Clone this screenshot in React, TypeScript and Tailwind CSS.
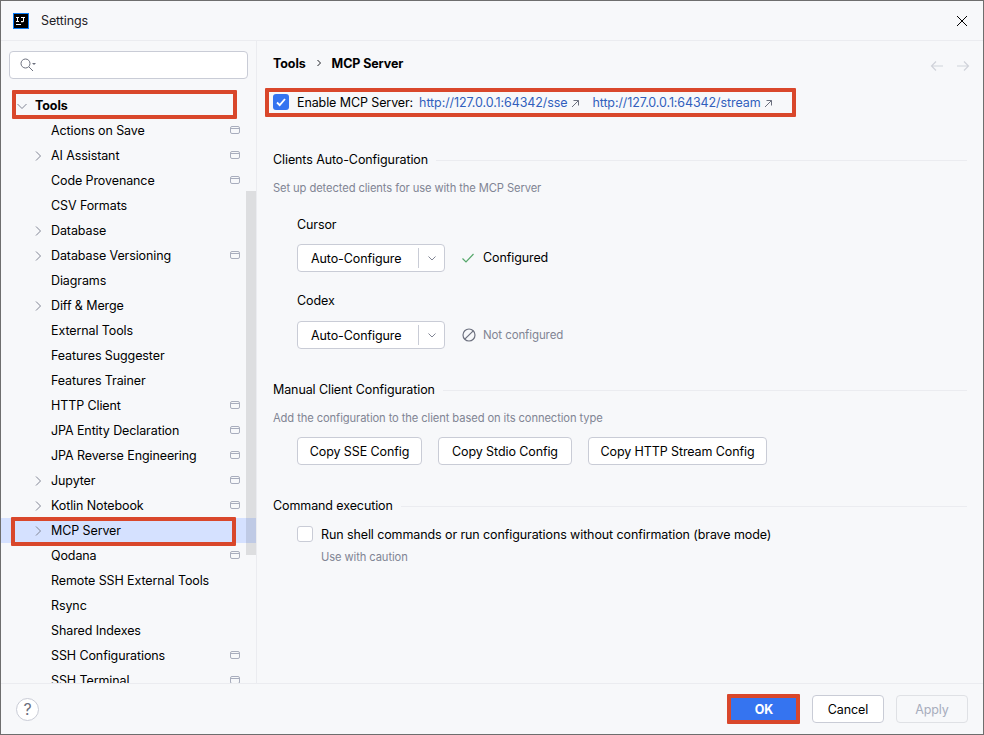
import React from "react";

const items: [string, boolean, boolean][] = [
  ["Actions on Save", false, true],
  ["AI Assistant", true, true],
  ["Code Provenance", false, true],
  ["CSV Formats", false, false],
  ["Database", true, false],
  ["Database Versioning", true, true],
  ["Diagrams", false, false],
  ["Diff & Merge", true, false],
  ["External Tools", false, false],
  ["Features Suggester", false, false],
  ["Features Trainer", false, false],
  ["HTTP Client", false, true],
  ["JPA Entity Declaration", false, true],
  ["JPA Reverse Engineering", false, true],
  ["Jupyter", true, true],
  ["Kotlin Notebook", true, true],
  ["MCP Server", true, false],
  ["Qodana", false, true],
  ["Remote SSH External Tools", false, false],
  ["Rsync", false, false],
  ["Shared Indexes", false, false],
  ["SSH Configurations", false, true],
  ["SSH Terminal", false, true],
];

function Chevron({ down = false }: { down?: boolean }) {
  return (
    <svg width="16" height="16" viewBox="0 0 16 16" fill="none" stroke="#818594" strokeWidth="1">
      {down ? <path d="M3.5 6l4.5 4.5L12.5 6" /> : <path d="M6 3.5l4.5 4.5L6 12.5" />}
    </svg>
  );
}

function ProjectIcon() {
  return (
    <svg width="10" height="10" viewBox="0 0 10 10" fill="none" stroke="#a8adbd" strokeWidth="1">
      <rect x="0.5" y="1.5" width="9" height="7" rx="1.5" />
      <path d="M0.5 3.5h9" />
    </svg>
  );
}

function Ext() {
  return (
    <svg width="9" height="9" viewBox="0 0 9 9" fill="none" stroke="#6c707e" strokeWidth="1" className="ml-[4px]">
      <path d="M1 8l6.5-6.5M2.5 1.5h5v5" />
    </svg>
  );
}

function Mark({ className }: { className: string }) {
  return <div className={`absolute border-[4px] border-[#d9472b] rounded-[1px] pointer-events-none ${className}`} />;
}

function Section({ title }: { title: string }) {
  return (
    <div className="flex items-center gap-[8px] h-[18px] pr-[16px]">
      <span className="text-[#000000]">{title}</span>
      <div className="flex-1 h-px bg-[#ebecf0]" />
    </div>
  );
}

function Btn({ label, w }: { label: string; w: string }) {
  return (
    <div className={`h-[28px] ${w} flex items-center justify-center bg-white border border-[#c9ccd6] rounded-[4px] text-black`}>
      <span className="translate-y-[1px]">{label}</span>
    </div>
  );
}

function Combo() {
  return (
    <div className="h-[28px] w-[148px] flex items-center bg-white border border-[#c9ccd6] rounded-[4px]">
      <span className="pl-[13px] w-[120px] text-black translate-y-[1px]">Auto-Configure</span>
      <div className="w-px h-[20px] bg-[#c9ccd6]" />
      <div className="flex-1 flex justify-center">
        <svg width="10" height="10" viewBox="0 0 10 10" fill="none" stroke="#818594">
          <path d="M1.5 3.5L5 7l3.5-3.5" />
        </svg>
      </div>
    </div>
  );
}

export default function App() {
  return (
    <div
      className="w-[984px] h-[735px] flex flex-col bg-[#f7f8fa] border-x border-t border-b border-[#6e6e6e] overflow-hidden text-[12.5px] tracking-[-0.1px] text-black"
      style={{ fontFamily: "Inter, 'Liberation Sans', sans-serif" }}
    >
      <div className="h-[40px] shrink-0 flex items-center border-b border-[#ebecf0] pl-[12px] pr-[15px]">
        <svg width="16" height="16" viewBox="0 0 16 16">
          <rect width="16" height="16" fill="#087cfa" />
          <rect x="1" y="1" width="14" height="14" fill="#000" />
          <rect x="3" y="11" width="5" height="1" fill="#fff" />
          <path d="M3 4h3v1H5v3h1v1H3V8h1V5H3zM8 4h4v1h-1v3.5L10 9.2H8V8h2V5H8z" fill="#fff" />
        </svg>
        <span className="ml-[12px] text-[#1f2126] translate-y-[1px]">Settings</span>
        <svg width="12" height="12" viewBox="0 0 12 12" className="ml-auto" fill="none" stroke="#000" strokeWidth="1">
          <path d="M1 1l10 10M11 1L1 11" />
        </svg>
      </div>

      <div className="flex-1 flex min-h-0">
        <div className="w-[256px] shrink-0 border-r border-[#ebecf0] flex flex-col relative overflow-hidden">
          <div className="pl-[8px] pr-[8px] pt-[10px]">
            <div className="h-[28px] w-[239px] bg-white border border-[#c9ccd6] rounded-[4px] flex items-center pl-[9px]">
              <svg width="18" height="16" viewBox="0 0 18 16" fill="none" stroke="#6c707e">
                <circle cx="6.5" cy="6.5" r="4.5" />
                <path d="M10 10l4 4" />
                <path d="M13 6h4l-2 2z" fill="#6c707e" stroke="none" />
              </svg>
            </div>
          </div>
          <div className="relative mt-[14px] h-[25px] shrink-0 flex items-center text-black font-bold">
            <div className="ml-[13px] w-[21px]">
              <Chevron down />
            </div>
            <span className="translate-y-[1px]">Tools</span>
            <Mark className="left-[11px] top-[-3px] w-[225px] h-[29px]" />
          </div>
          {items.map(([name, arrow, proj]) => {
            const sel = name === "MCP Server";
            return (
              <div key={name} className={`relative h-[25px] shrink-0 flex items-center ${sel ? "bg-[#d5e1ff]" : ""}`}>
                <div className="ml-[29px] w-[21px]">{arrow && <Chevron />}</div>
                <span className="text-black whitespace-nowrap translate-y-[1px]">{name}</span>
                {proj && (
                  <div className="absolute left-[229px] top-[7px]">
                    <ProjectIcon />
                  </div>
                )}
                {sel && <Mark className="left-[10px] top-[-1px] w-[225px] h-[29px]" />}
              </div>
            );
          })}
          <div className="absolute left-[245px] top-[150px] w-[10px] h-[364px] bg-black/10" />
        </div>

        <div className="flex-1 min-w-0 pl-[16px] relative">
          <div className="relative flex items-center h-[20px] mt-[12px] font-bold">
            <span className="translate-y-[1px]">Tools</span>
            <svg width="6" height="8" viewBox="0 0 6 8" fill="none" stroke="#1f2126" className="mx-[10px]">
              <path d="M1.5 1L4.5 4L1.5 7" />
            </svg>
            <span className="translate-y-[1px]">MCP Server</span>
            <div className="absolute right-[13px] top-[7px] flex gap-[12px] font-normal">
              <svg width="14" height="12" viewBox="0 0 14 12" fill="none" stroke="#d0d3da" strokeWidth="1.2">
                <path d="M13 6H1.5M6 1.5L1.5 6L6 10.5" />
              </svg>
              <svg width="14" height="12" viewBox="0 0 14 12" fill="none" stroke="#d0d3da" strokeWidth="1.2">
                <path d="M1 6h11.5M8 1.5L12.5 6L8 10.5" />
              </svg>
            </div>
          </div>

          <div className="relative flex items-center h-[20px] mt-[20px]">
            <div className="w-[16px] h-[16px] rounded-[3px] bg-[#3574f0] flex items-center justify-center mr-[8px] mb-[2px]">
              <svg width="12" height="12" viewBox="0 0 12 12" fill="none" stroke="#fff" strokeWidth="1.8">
                <path d="M2 6.5l2.7 2.7L10 3" />
              </svg>
            </div>
            <span>Enable MCP Server:</span>
            <span className="ml-[6px] text-[#315fbd]">http://127.0.0.1:64342/sse</span>
            <Ext />
            <span className="ml-[12px] text-[#315fbd]">http://127.0.0.1:64342/stream</span>
            <Ext />
            <Mark className="left-[-8px] top-[-5px] w-[531px] h-[29px]" />
          </div>

          <div className="mt-[38px]">
            <Section title="Clients Auto-Configuration" />
            <div className="mt-[11px] text-[11.2px] leading-[17px] text-[#818594]">Set up detected clients for use with the MCP Server</div>
          </div>

          <div className="pl-[24px]">
            <div className="mt-[19px] h-[18px] flex items-center">Cursor</div>
            <div className="mt-[10px] flex items-center">
              <Combo />
              <svg width="14" height="14" viewBox="0 0 14 14" fill="none" stroke="#55a76a" strokeWidth="1.2" className="ml-[16px] mr-[8px]">
                <path d="M1.5 7.5l3.5 3.5 7.5-8" />
              </svg>
              <span>Configured</span>
            </div>
            <div className="mt-[20px] h-[18px] flex items-center">Codex</div>
            <div className="mt-[11px] flex items-center">
              <Combo />
              <svg width="14" height="14" viewBox="0 0 14 14" fill="none" stroke="#6c707e" strokeWidth="1.2" className="ml-[17px] mr-[7px]">
                <circle cx="7" cy="7" r="6" />
                <path d="M2.8 11.2L11.2 2.8" />
              </svg>
              <span className="text-[11.5px] text-[#818594] translate-y-[1px]">Not configured</span>
            </div>
          </div>

          <div className="mt-[32px]">
            <Section title="Manual Client Configuration" />
            <div className="mt-[11px] text-[11.2px] leading-[17px] text-[#818594]">Add the configuration to the client based on its connection type</div>
          </div>
          <div className="mt-[10px] pl-[24px] flex gap-[16px]">
            <Btn label="Copy SSE Config" w="w-[125px]" />
            <Btn label="Copy Stdio Config" w="w-[134px]" />
            <Btn label="Copy HTTP Stream Config" w="w-[179px]" />
          </div>

          <div className="mt-[32px]">
            <Section title="Command execution" />
          </div>
          <div className="mt-[9px] pl-[24px] flex items-center h-[20px]">
            <div className="w-[16px] h-[16px] bg-white border border-[#c9ccd6] rounded-[3px] mr-[8px]" />
            <span className="translate-y-[1px]">Run shell commands or run configurations without confirmation (brave mode)</span>
          </div>
          <div className="mt-[5px] pl-[48px] text-[11.2px] leading-[17px] text-[#818594]">Use with caution</div>
        </div>
      </div>

      <div className="h-[51px] shrink-0 border-t border-[#ebecf0] flex items-center pl-[15px] pr-[15px] bg-[#f7f8fa] relative">
        <div className="w-[23px] h-[23px] rounded-full bg-white border border-[#c9ccd6] flex items-center justify-center text-[16px] text-[#6c707e]">?</div>
        <div className="ml-auto flex items-center gap-[12px]">
          <div className="relative w-[72px] h-[28px] bg-[#3574f0] rounded-[2px] flex items-center justify-center text-white font-bold">
            <span className="translate-y-[1px]">OK</span>
            <Mark className="left-[-1px] top-[-1px] w-[73px] h-[30px]" />
          </div>
          <div className="w-[72px] h-[28px] bg-white border border-[#c9ccd6] rounded-[4px] flex items-center justify-center">
            <span className="translate-y-[1px]">Cancel</span>
          </div>
          <div className="w-[72px] h-[28px] border border-[#dfe1e5] rounded-[4px] flex items-center justify-center text-[#a8adbd]">
            <span className="translate-y-[1px]">Apply</span>
          </div>
        </div>
      </div>
    </div>
  );
}
